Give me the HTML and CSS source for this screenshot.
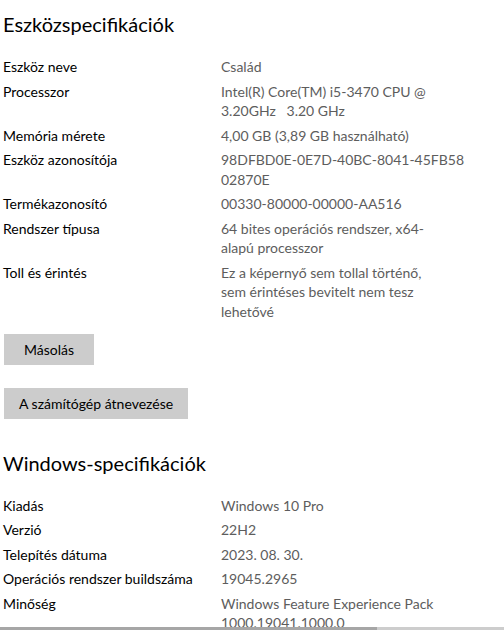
FILE: index.html
```html
<!DOCTYPE html>
<html lang="hu">
<head>
<meta charset="utf-8">
<title>Eszközspecifikációk</title>
<link rel="stylesheet" href="styles.css">
</head>
<body>
<main class="page">
  <section class="section">
    <h2 class="heading">Eszközspecifikációk</h2>
    <dl class="specs">
      <dt>Eszköz neve</dt><dd>Család</dd>
      <dt>Processzor</dt><dd>Intel(R) Core(TM) i5-3470 CPU @<br>3.20GHz&nbsp;&nbsp;&nbsp;3.20 GHz</dd>
      <dt>Memória mérete</dt><dd>4,00 GB (3,89 GB használható)</dd>
      <dt>Eszköz azonosítója</dt><dd>98DFBD0E-0E7D-40BC-8041-45FB58<br>02870E</dd>
      <dt>Termékazonosító</dt><dd>00330-80000-00000-AA516</dd>
      <dt>Rendszer típusa</dt><dd>64 bites operációs rendszer, x64-<br>alapú processzor</dd>
      <dt>Toll és érintés</dt><dd>Ez a képernyő sem tollal történő,<br>sem érintéses bevitelt nem tesz<br>lehetővé</dd>
    </dl>
    <div class="actions">
      <button class="btn" type="button">Másolás</button>
      <button class="btn" type="button">A számítógép átnevezése</button>
    </div>
  </section>
  <section class="section">
    <h2 class="heading heading-second">Windows-specifikációk</h2>
    <dl class="specs">
      <dt>Kiadás</dt><dd>Windows 10 Pro</dd>
      <dt>Verzió</dt><dd>22H2</dd>
      <dt>Telepítés dátuma</dt><dd>2023. 08. 30.</dd>
      <dt>Operációs rendszer buildszáma</dt><dd>19045.2965</dd>
      <dt>Minőség</dt><dd>Windows Feature Experience Pack<br>1000.19041.1000.0</dd>
    </dl>
  </section>
</main>
<div class="hscroll"><div class="hscroll-thumb"></div></div>
</body>
</html>
```

FILE: styles.css
```css
html, body {
  margin: 0;
  padding: 0;
  background: #ffffff;
  overflow: hidden;
}

body {
  font-family: "Lato", "Noto Sans", "Liberation Sans", sans-serif;
  font-size: 14px;
  color: #000000;
}

.page {
  padding-left: 3px;
}

.heading {
  margin: 10px 0 19px 0;
  font-size: 20px;
  line-height: 28px;
  font-weight: 400;
  color: #000000;
}

.heading-second {
  margin-top: 30px;
}

.specs {
  display: grid;
  grid-template-columns: 218px 260px;
  row-gap: 5px;
  margin: 0;
  line-height: 19.5px;
}

.specs dt {
  margin: 0;
  color: #000000;
}

.specs dd {
  margin: 0;
  color: #5d5d5d;
}

.actions {
  display: flex;
  flex-direction: column;
  align-items: flex-start;
  gap: 23px;
  padding-top: 12.5px;
  padding-left: 1px;
}

.btn {
  height: 31px;
  min-width: 90px;
  padding: 0 15px;
  border: none;
  background: #cccccc;
  color: #000000;
  font-family: inherit;
  font-size: 14px;
  line-height: 31px;
}

.hscroll {
  position: fixed;
  left: 0;
  right: 0;
  bottom: 0;
  height: 3px;
  background: #cdcdcd;
}

.hscroll-thumb {
  width: 377px;
  height: 3px;
  background: #a6a6a6;
}
```
